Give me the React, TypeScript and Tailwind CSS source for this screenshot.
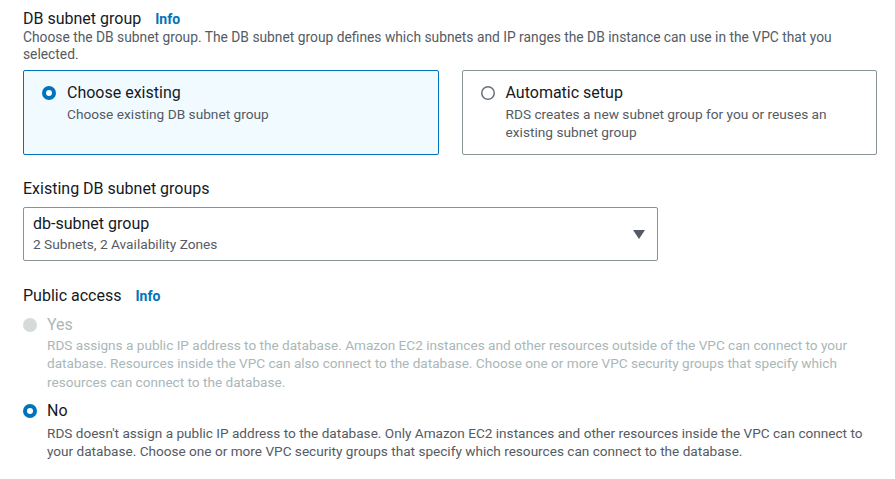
import React from "react";

function Radio({ state }: { state: "on" | "off" | "disabled" }) {
  if (state === "on") {
    return (
      <svg width="14" height="14" viewBox="0 0 14 14" className="shrink-0">
        <circle cx="7" cy="7" r="7" fill="#0073bb" />
        <circle cx="7" cy="7" r="3" fill="#ffffff" />
      </svg>
    );
  }
  if (state === "disabled") {
    return (
      <svg width="14" height="14" viewBox="0 0 14 14" className="shrink-0">
        <circle cx="7" cy="7" r="7" fill="#d5dbdb" />
      </svg>
    );
  }
  return (
    <svg width="14" height="14" viewBox="0 0 14 14" className="shrink-0">
      <circle cx="7" cy="7" r="6.25" fill="#ffffff" stroke="#687078" strokeWidth="1.5" />
    </svg>
  );
}

function Info() {
  return <span className="ml-[14px] text-[14px] font-bold text-[#0073bb]">Info</span>;
}

export default function App() {
  return (
    <div
      className="min-h-[479px] w-[895px] bg-white pl-[23px] pr-[18px] pt-[9px] text-[#16191f]"
      style={{ fontFamily: "Roboto, 'Open Sans', sans-serif" }}
    >
      {/* DB subnet group */}
      <div className="flex items-center text-[16px] leading-[20px]">
        DB subnet group
        <Info />
      </div>
      <p className="text-[13.8px] leading-[17px] text-[#545b64]">
        Choose the DB subnet group. The DB subnet group defines which subnets and IP ranges the DB instance can use in the VPC that you
        <br />
        selected.
      </p>

      <div className="mt-[7px] grid grid-cols-2 gap-[23px]">
        <div className="h-[85px] rounded-[2px] border border-[#0073bb] bg-[#f1faff] px-[18px] pt-[12px]">
          <div className="flex items-center gap-[11px] text-[16px] leading-[20px]">
            <Radio state="on" />
            Choose existing
          </div>
          <p className="pl-[25px] pt-[2px] text-[13.7px] leading-[18px] text-[#545b64]">
            Choose existing DB subnet group
          </p>
        </div>
        <div className="h-[85px] rounded-[2px] border border-[#879596] bg-white px-[18px] pt-[12px]">
          <div className="flex items-center gap-[11px] text-[16px] leading-[20px]">
            <Radio state="off" />
            Automatic setup
          </div>
          <p className="pl-[25px] pt-[2px] text-[13.7px] leading-[18px] text-[#545b64]">
            RDS creates a new subnet group for you or reuses an
            <br />
            existing subnet group
          </p>
        </div>
      </div>

      {/* Existing DB subnet groups */}
      <div className="mt-[24px] text-[16px] leading-[20px]">Existing DB subnet groups</div>
      <div className="mt-[8px] flex h-[54px] w-[635px] items-center justify-between rounded-[2px] border border-[#879596] pl-[9px] pr-[12px]">
        <div>
          <div className="text-[16px] leading-[20px]">db-subnet group</div>
          <div className="text-[13.7px] leading-[20px] text-[#545b64]">2 Subnets, 2 Availability Zones</div>
        </div>
        <svg width="12" height="9" viewBox="0 0 12 9">
          <polygon points="0,0 12,0 6,9" fill="#545b64" />
        </svg>
      </div>

      {/* Public access */}
      <div className="mt-[25px] flex items-center text-[16px] leading-[20px]">
        Public access
        <Info />
      </div>

      <div className="mt-[9px] flex items-center gap-[10px] text-[16px] leading-[20px] text-[#aab7b8]">
        <Radio state="disabled" />
        Yes
      </div>
      <p className="pl-[24px] pt-[1px] text-[13.6px] leading-[18.3px] text-[#aab7b8]">
        RDS assigns a public IP address to the database. Amazon EC2 instances and other resources outside of the VPC can connect to your
        <br />
        database. Resources inside the VPC can also connect to the database. Choose one or more VPC security groups that specify which
        <br />
        resources can connect to the database.
      </p>

      <div className="mt-[10px] flex items-center gap-[10px] text-[16px] leading-[20px]">
        <Radio state="on" />
        No
      </div>
      <p className="pl-[24px] pt-[3px] text-[13.6px] leading-[18.3px] text-[#545b64]">
        RDS doesn't assign a public IP address to the database. Only Amazon EC2 instances and other resources inside the VPC can connect to
        <br />
        your database. Choose one or more VPC security groups that specify which resources can connect to the database.
      </p>
    </div>
  );
}
